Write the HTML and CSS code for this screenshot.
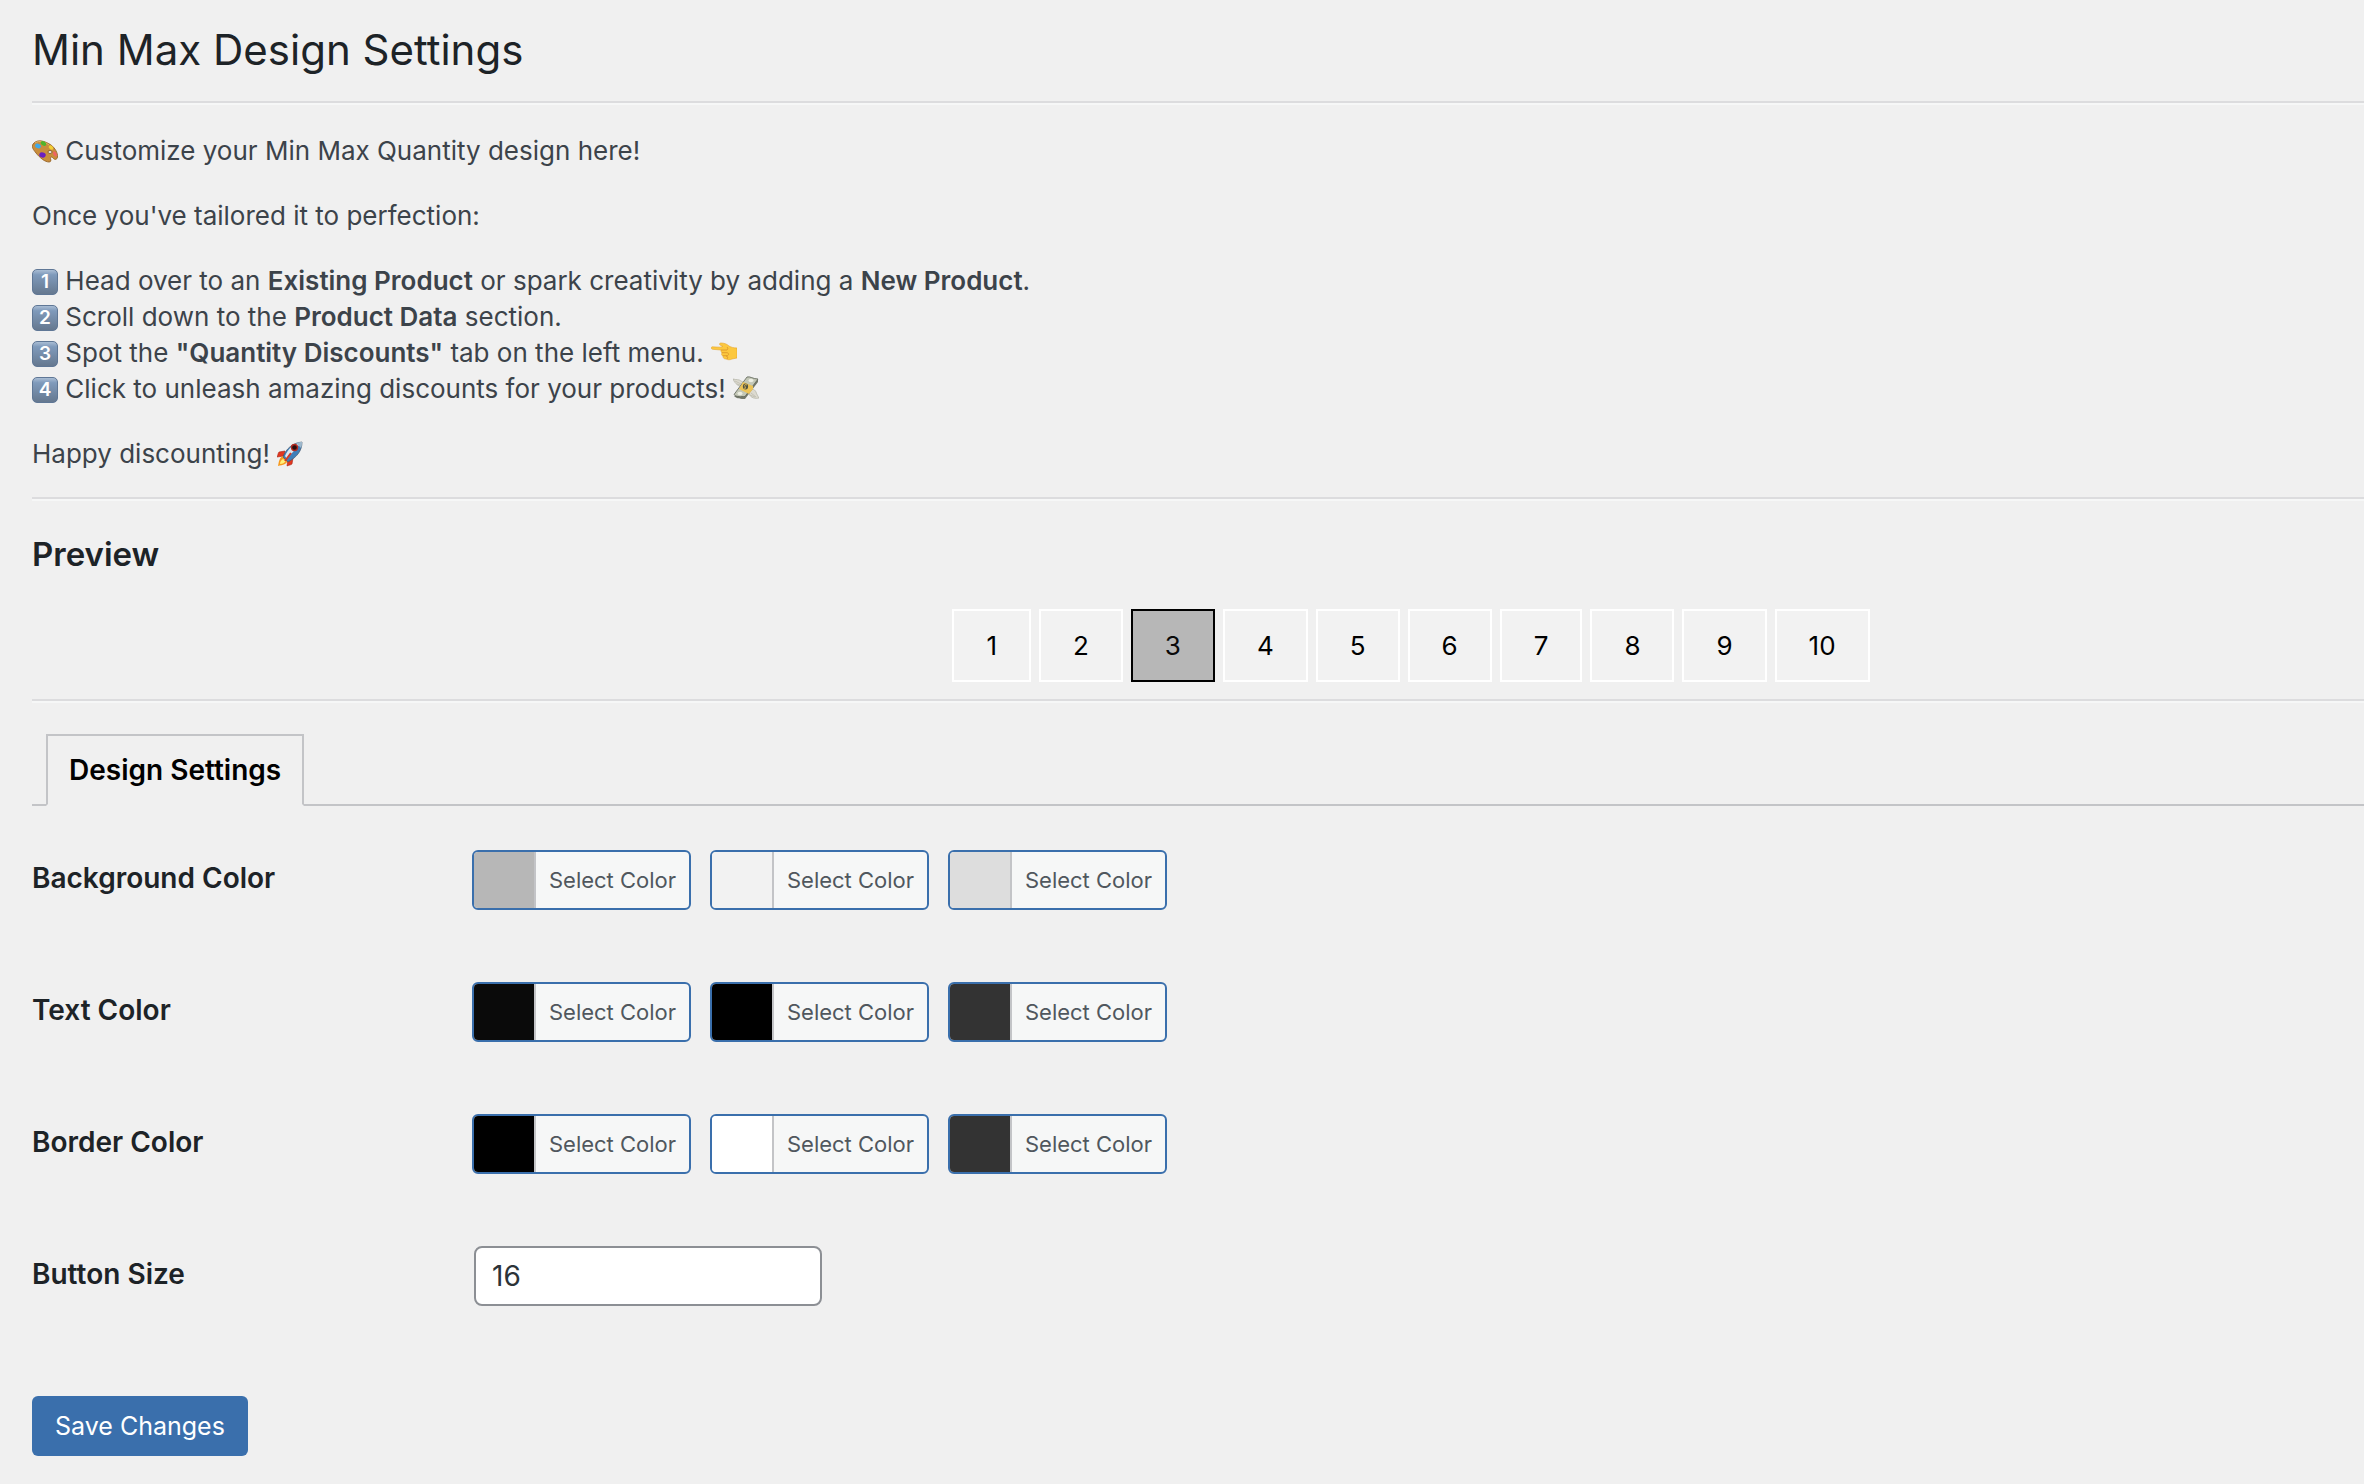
FILE: index.html
```html
<!DOCTYPE html>
<html lang="en">
<head>
<meta charset="utf-8">
<meta name="viewport" content="width=device-width, initial-scale=1">
<title>Min Max Design Settings</title>
<link rel="stylesheet" href="styles.css">
</head>
<body>
<main class="wrap">
  <h1 class="page-title">Min Max Design Settings</h1>
  <hr class="rule">

  <section class="intro">
    <p><svg class="emoji" viewBox="0 0 26 26" aria-hidden="true">
        <path d="M2 5C6 1 13 3 19 7c4 3 7 8 6.500 12-.5 3-3 3-4.500 1-1-1.500-3-1-2.500.500.700 2 .500 3.500-1.500 3.500-4 0-9-4-13-9S-1 8 2 5z" fill="#c98d3c" stroke="#8f5a1c" stroke-width=".8"/>
        <path d="M3 5c4-3 10-1 14 2" fill="none" stroke="#e3b269" stroke-width="1"/>
        <ellipse cx="6" cy="8" rx="3" ry="2.300" fill="#3fa9e8" transform="rotate(25 6 8)"/>
        <ellipse cx="11.500" cy="5.500" rx="3" ry="2" fill="#4fb52c" transform="rotate(30 11.500 5.500)"/>
        <ellipse cx="19" cy="9.500" rx="2.600" ry="1.800" fill="#f2cf35" transform="rotate(45 19 9.500)"/>
        <ellipse cx="23" cy="16" rx="1.600" ry="2.800" fill="#ef6464" transform="rotate(-30 23 16)"/>
        <ellipse cx="10.500" cy="17" rx="3.300" ry="2.500" fill="#6a1fc0" transform="rotate(15 10.500 17)"/>
        <ellipse cx="18" cy="14" rx="2" ry="1.500" fill="#f0f0f0" stroke="#6d4314" stroke-width=".7"/>
      </svg> Customize your Min Max Quantity design here!</p>
    <p>Once you've tailored it to perfection:</p>
    <p>
      <span class="keycap">1</span> Head over to an <strong>Existing Product</strong> or spark creativity by adding a <strong>New Product</strong>.<br>
      <span class="keycap">2</span> Scroll down to the <strong>Product Data</strong> section.<br>
      <span class="keycap">3</span> Spot the <strong>"Quantity Discounts"</strong> tab on the left menu. <svg class="emoji" viewBox="0 0 26 26" aria-hidden="true">
        <path d="M1 6.800C0 7.200 0 9 1.500 9.300L10 10c0 1 0 2 1 3-1 1 0 3 1 3 0 2 1 3 3 3 2 1 4 1 6 0l5-1V8c-4 0-6-1-8-2-2-2-5-3-8-3-2 0-2 2 0 2.500L12 6.500 9 7.200z" fill="#fcc83f" stroke="#e6a52c" stroke-width=".6"/>
        <path d="M11 12.700h5c2 0 2 3 0 3h-4M10 10h6c1-1 1-2 0-3M15 16c2 0 2 2 1 3" fill="none" stroke="#d9922a" stroke-width=".8"/>
      </svg><br>
      <span class="keycap">4</span> Click to unleash amazing discounts for your products! <svg class="emoji" viewBox="0 0 26 26" aria-hidden="true">
        <path d="M11 11C6 11 2 8 0 3c3 1 6 0 8 2 3 1 4 3 4 5zM17 14c3-2 5 0 6 2 1 3 2 4 3 6-4 1-8 0-10-4z" fill="#dcdad0" stroke="#a9a99b" stroke-width=".6"/>
        <path d="M2 5l8 4M4 8l6 2M18 17l5 4M17 19l5 2" stroke="#b9b8a9" stroke-width=".7"/>
        <path d="M1 20c3 3 7 3 11 3L25 6V3L11 18z" fill="#74796b"/>
        <path d="M14 1c3-1 6 2 11 2L12 20.500c-4 0-8 1-11-2z" fill="#c3c7b6" stroke="#5d6357" stroke-width=".8"/>
        <ellipse cx="18" cy="4.500" rx="2.500" ry="1.800" fill="#eceee2"/><ellipse cx="7" cy="17.500" rx="2.500" ry="1.800" fill="#eceee2"/>
        <path d="M10 6l10 4v3l-4 5-10-5z" fill="#ecc356"/>
        <ellipse cx="12.500" cy="10.500" rx="2.600" ry="3" fill="#4e5142"/>
        <path d="M14 9c-2-1-3 0-2 1.500s1 2.500-1 1.500" fill="none" stroke="#ecc356" stroke-width=".9"/>
      </svg>
    </p>
    <p>Happy discounting! <svg class="emoji" viewBox="0 0 26 26" aria-hidden="true">
        <path d="M8 10L2 11c-1 1-1 3-2 5l7-1zM16 17l-1 6c-1 1-3 1-5 2l1-7z" fill="#e2371f" stroke="#a82315" stroke-width=".6"/>
        <path d="M6 15c-3 1-4 4-5 10 5-1 9-2 10-6z" fill="#f79a1e"/>
        <path d="M6 18c-2 1-3 3-3 5 3 0 4-1 6-3z" fill="#fff07a"/>
        <path d="M6 16C9 8 15 2 25 1c0 9-5 15-14 20z" fill="#3f7fb9" stroke="#46586b" stroke-width=".7"/>
        <path d="M8 15C11 8 16 3 24 2c-4 4-8 9-14 16z" fill="#dce7ef"/>
        <path d="M25 1c-2 0-4 0-6 1l5 5c1-2 1-4 1-6z" fill="#9fb9cd"/>
        <circle cx="17.500" cy="6.500" r="3" fill="#2a0f10" stroke="#b52a20" stroke-width="1.300"/>
        <path d="M14 12l-6 8" stroke="#d43a24" stroke-width="2"/>
      </svg></p>
  </section>
  <hr class="rule">

  <section class="preview">
    <h2 class="section-title">Preview</h2>
    <div class="quantities">
      <button type="button" class="quantity">1</button>
      <button type="button" class="quantity">2</button>
      <button type="button" class="quantity quantity-active">3</button>
      <button type="button" class="quantity">4</button>
      <button type="button" class="quantity">5</button>
      <button type="button" class="quantity">6</button>
      <button type="button" class="quantity">7</button>
      <button type="button" class="quantity">8</button>
      <button type="button" class="quantity">9</button>
      <button type="button" class="quantity">10</button>
    </div>
  </section>
  <hr class="rule">

  <nav class="tabs">
    <a class="tab" href="#design">Design Settings</a>
  </nav>

  <form class="settings" id="design">
    <div class="row" role="group" aria-labelledby="background-label">
      <span class="row-label" id="background-label">Background Color</span>
      <div class="pickers">
        <button type="button" class="picker"><span class="swatch" style="background:#b7b7b7"></span><span class="picker-text">Select Color</span></button>
        <button type="button" class="picker"><span class="swatch" style="background:#f2f2f2"></span><span class="picker-text">Select Color</span></button>
        <button type="button" class="picker"><span class="swatch" style="background:#dddddd"></span><span class="picker-text">Select Color</span></button>
      </div>
    </div>
    <div class="row" role="group" aria-labelledby="text-label">
      <span class="row-label" id="text-label">Text Color</span>
      <div class="pickers">
        <button type="button" class="picker"><span class="swatch" style="background:#0a0a0a"></span><span class="picker-text">Select Color</span></button>
        <button type="button" class="picker"><span class="swatch" style="background:#000000"></span><span class="picker-text">Select Color</span></button>
        <button type="button" class="picker"><span class="swatch" style="background:#333333"></span><span class="picker-text">Select Color</span></button>
      </div>
    </div>
    <div class="row" role="group" aria-labelledby="border-label">
      <span class="row-label" id="border-label">Border Color</span>
      <div class="pickers">
        <button type="button" class="picker"><span class="swatch" style="background:#000000"></span><span class="picker-text">Select Color</span></button>
        <button type="button" class="picker"><span class="swatch" style="background:#ffffff"></span><span class="picker-text">Select Color</span></button>
        <button type="button" class="picker"><span class="swatch" style="background:#333333"></span><span class="picker-text">Select Color</span></button>
      </div>
    </div>
    <div class="row">
      <label class="row-label" for="button-size">Button Size</label>
      <input class="size-input" id="button-size" type="text" inputmode="numeric" value="16">
    </div>
    <button type="submit" class="save">Save Changes</button>
  </form>
</main>
</body>
</html>
```

FILE: styles.css
```css
* {
  box-sizing: border-box;
}

body {
  margin: 0;
  background: #f0f0f0;
  color: #3c434a;
  font-family: Inter, "Liberation Sans", sans-serif;
  font-size: 26px;
  line-height: 36px;
}

button,
input {
  margin: 0;
  font: inherit;
}

.wrap {
  padding: 20px 0 28px 32px;
}

.page-title {
  margin: 0 0 21px;
  color: #1d2327;
  font-size: 42px;
  font-weight: 400;
  line-height: 60px;
}

.rule {
  height: 4px;
  margin: 0;
  border: 0;
  border-top: 2px solid #dcdcde;
  background: #f6f7f7;
}

.intro {
  display: flex;
  flex-direction: column;
  gap: 29px;
  padding: 28px 0 25px;
}

.intro p {
  margin: 0;
}

.intro strong {
  font-weight: 600;
}

.emoji {
  width: 26px;
  height: 26px;
  vertical-align: -4px;
}

.keycap {
  display: inline-block;
  width: 26px;
  height: 26px;
  border: 1px solid #5f7796;
  border-radius: 5px;
  background: linear-gradient(#a9bdd4, #7f9abb 20%, #65788f);
  color: #fff;
  font-size: 19px;
  font-weight: 600;
  line-height: 24px;
  text-align: center;
  vertical-align: 2px;
}

.section-title {
  margin: 0;
  color: #1d2327;
  font-size: 33px;
  font-weight: 600;
  line-height: 44px;
}

.preview {
  padding: 31px 0 17px;
}

.quantities {
  display: flex;
  justify-content: center;
  gap: 8px;
  padding: 33px 0 0 426px;
}

.quantity {
  padding: 16px 32px;
  border: 2px solid #fff;
  background: #f2f2f2;
  color: #000;
  font-size: 26px;
  line-height: 37px;
}

.quantity-active {
  border-color: #000;
  background: #b7b7b7;
  color: #0a0a0a;
}

.tabs {
  display: flex;
  margin-top: 31px;
}

.tabs::before,
.tabs::after {
  content: "";
  width: 14px;
  border-bottom: 2px solid #c3c4c7;
}

.tabs::after {
  flex: 1;
}

.tab {
  padding: 11px 21px;
  border: 2px solid #c3c4c7;
  border-bottom-color: #f0f0f0;
  color: #000;
  font-size: 28px;
  font-weight: 600;
  line-height: 46px;
  text-decoration: none;
}

.settings {
  padding-top: 44px;
}

.row {
  display: grid;
  grid-template-columns: 440px 1fr;
  align-items: start;
  padding-bottom: 72px;
}

.row-label {
  padding-top: 10px;
  color: #1d2327;
  font-size: 28px;
  font-weight: 600;
}

.pickers {
  display: flex;
  gap: 19px;
}

.picker {
  display: flex;
  width: 219px;
  height: 60px;
  padding: 0;
  overflow: hidden;
  border: 2px solid #3a6fac;
  border-radius: 6px;
  background: #f6f7f7;
  color: #50575e;
  font-size: 22px;
  line-height: 56px;
}

.swatch {
  width: 60px;
  height: 56px;
}

.picker-text {
  flex: 1;
  border-left: 2px solid #c3c4c7;
}

.size-input {
  width: 348px;
  height: 60px;
  margin-left: 2px;
  padding: 0 16px;
  border: 2px solid #8c8f94;
  border-radius: 8px;
  background: #fff;
  color: #2c3338;
  font-size: 28px;
}

.save {
  height: 60px;
  margin-top: 18px;
  padding: 0 23px;
  border: 0;
  border-radius: 6px;
  background: #3a6fac;
  color: #fff;
  font-size: 25px;
}
```
